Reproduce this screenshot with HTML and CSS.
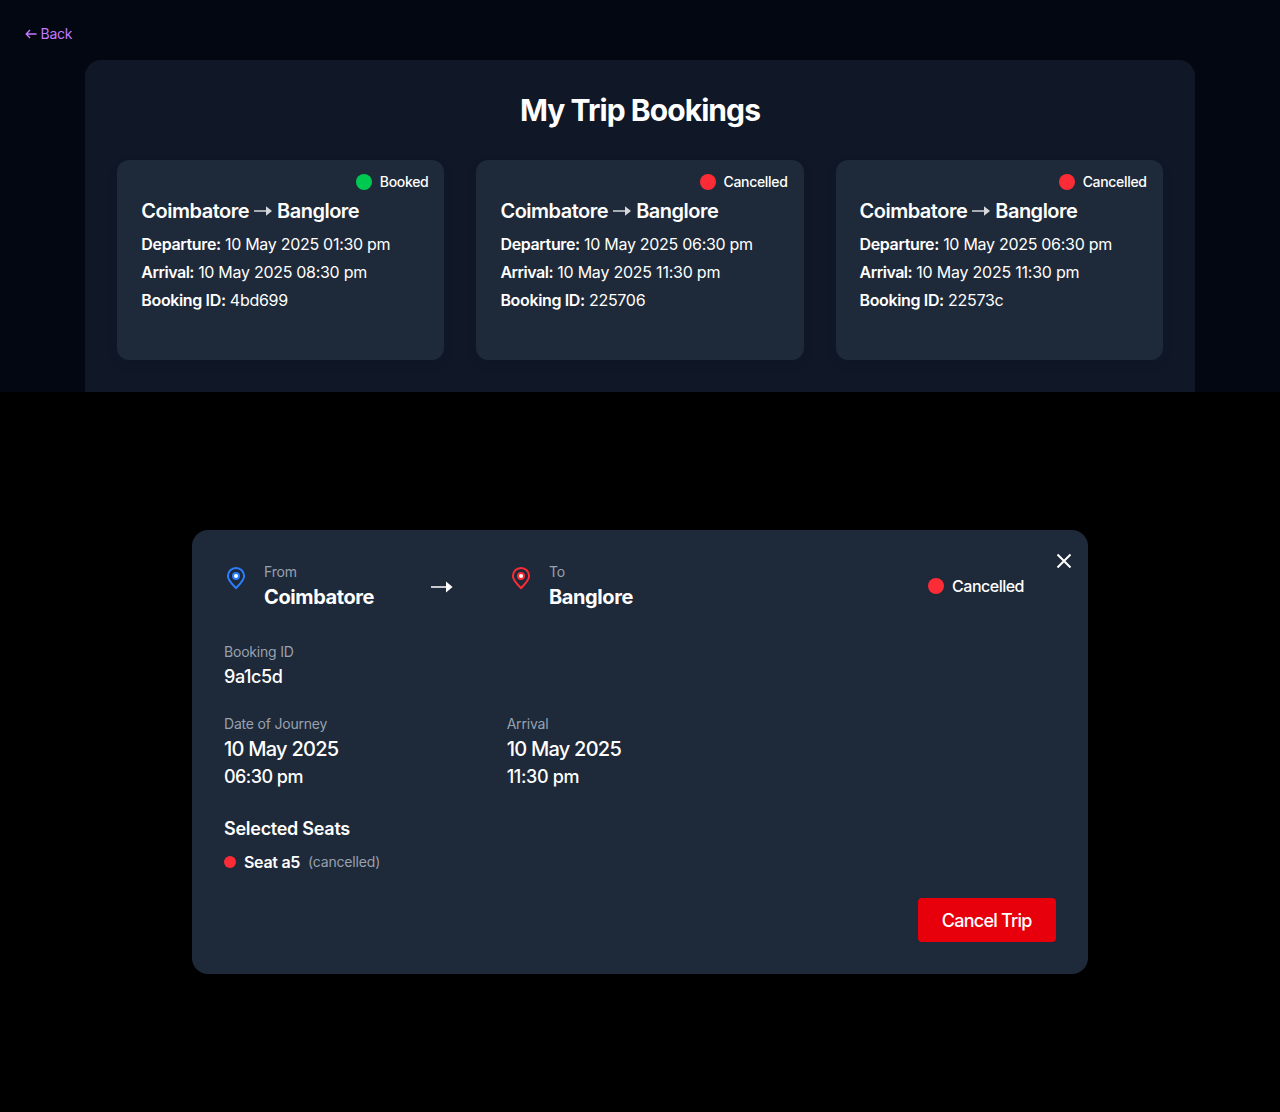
FILE: index.html
```html
<!DOCTYPE html>
<html lang="en">
<head>
<meta charset="utf-8">
<title>My Trip Bookings</title>
<link rel="stylesheet" href="styles.css">
</head>
<body>
<main class="page">
  <a class="back"><svg width="12" height="10" viewBox="0 0 12 10"><path d="M5 1 1.200 5 5 9M1.200 5H11.500"/></svg><span>Back</span></a>
  <section class="panel">
    <h1 class="title"><span>My Trip Bookings</span></h1>
    <div class="cards">
      <article class="card">
        <div class="status"><i class="dot green"></i><span>Booked</span></div>
        <h2 class="route"><span>Coimbatore</span><svg width="18" height="10" viewBox="0 0 18 10"><path class="shaft" d="M0 5h13"/><path class="head" d="M12 .200 18 5l-6 4.800z"/></svg><span>Banglore</span></h2>
        <p><strong>Departure:</strong> <span>10 May 2025 01:30 pm</span></p>
        <p><strong class="arrival">Arrival:</strong> <span>10 May 2025 08:30 pm</span></p>
        <p><strong>Booking ID:</strong> <span>4bd699</span></p>
      </article>
      <article class="card">
        <div class="status"><i class="dot red"></i><span>Cancelled</span></div>
        <h2 class="route"><span>Coimbatore</span><svg width="18" height="10" viewBox="0 0 18 10"><path class="shaft" d="M0 5h13"/><path class="head" d="M12 .200 18 5l-6 4.800z"/></svg><span>Banglore</span></h2>
        <p><strong>Departure:</strong> <span>10 May 2025 06:30 pm</span></p>
        <p><strong class="arrival">Arrival:</strong> <span class="eleven">10 May 2025 11:30 pm</span></p>
        <p><strong>Booking ID:</strong> <span>225706</span></p>
      </article>
      <article class="card">
        <div class="status"><i class="dot red"></i><span>Cancelled</span></div>
        <h2 class="route"><span>Coimbatore</span><svg width="18" height="10" viewBox="0 0 18 10"><path class="shaft" d="M0 5h13"/><path class="head" d="M12 .200 18 5l-6 4.800z"/></svg><span>Banglore</span></h2>
        <p><strong>Departure:</strong> <span>10 May 2025 06:30 pm</span></p>
        <p><strong class="arrival">Arrival:</strong> <span class="eleven">10 May 2025 11:30 pm</span></p>
        <p><strong>Booking ID:</strong> <span>22573c</span></p>
      </article>
    </div>
  </section>
</main>
<div class="backdrop">
  <section class="dialog">
    <button class="close" aria-label="Close"><svg width="16" height="16" viewBox="0 0 16 16"><path d="m1.500 1.500 13 13m0-13-13 13"/></svg></button>
    <header class="trip">
      <div class="place from">
        <svg class="pin blue" width="24" height="24" viewBox="0 0 24 24"><path d="M12 22C9.500 19.300 3.900 14.700 3.900 10a8.100 8.100 0 0 1 16.200 0c0 4.700-5.600 9.300-8.100 12z"/><circle cx="12" cy="10" r="3"/></svg>
        <div><div class="label">From</div><div class="city">Coimbatore</div></div>
      </div>
      <svg class="arrow" width="22" height="12" viewBox="0 0 22 12"><path class="shaft" d="M0 6h16"/><path class="head" d="M15 .400 21.600 6 15 11.600z"/></svg>
      <div class="place to">
        <svg class="pin crimson" width="24" height="24" viewBox="0 0 24 24"><path d="M12 22C9.500 19.300 3.900 14.700 3.900 10a8.100 8.100 0 0 1 16.200 0c0 4.700-5.600 9.300-8.100 12z"/><circle cx="12" cy="10" r="3"/></svg>
        <div><div class="label">To</div><div class="city">Banglore</div></div>
      </div>
      <div class="state"><i class="dot red"></i><span>Cancelled</span></div>
    </header>
    <div class="booking"><div class="label">Booking ID</div><div class="time code"><span>9a1c5d</span></div></div>
    <div class="dates">
      <div><div class="label"><span>Date of Journey</span></div><div class="date"><span>10 May 2025</span></div><div class="time depart"><span>06:30 pm</span></div></div>
      <div><div class="label">Arrival</div><div class="date"><span>10 May 2025</span></div><div class="time"><span>11:30 pm</span></div></div>
    </div>
    <h3 class="seats"><span>Selected Seats</span></h3>
    <div class="seat"><i class="dot red small"></i><strong>Seat a5</strong><span class="note">(cancelled)</span></div>
    <div class="actions"><button class="cancel"><span>Cancel Trip</span></button></div>
  </section>
</div>
</body>
</html>
```
FILE: styles.css
```css
* { box-sizing: border-box; margin: 0; padding: 0; }
body { background: #000; color: #fff; font: 400 16px/24px Inter, sans-serif; }
svg { display: block; flex: none; overflow: visible; }
.page { height: 392px; padding-top: 24px; background: #030712; overflow: hidden; }
.back { display: flex; align-items: center; gap: 4px; height: 20px; margin-left: 24.5px; color: #c27aff; font-size: 14px; line-height: 20px; letter-spacing: -.25px; }
.back svg { fill: none; stroke: currentColor; stroke-width: 1.3; }
.panel { width: 1109.3px; height: 364px; margin: 16px auto 0; padding: 32px; border-radius: 16px; background: #101828; }
.title { font-size: 30px; line-height: 37px; height: 36px; font-weight: 700; text-align: center; letter-spacing: -.93px; }
.cards { display: grid; grid-template-columns: repeat(3, 1fr); gap: 32px; margin-top: 32px; }
.card { height: 200px; padding: 12px 24px; border-radius: 12px; background: #1e2939; box-shadow: 0 4px 10px rgba(0, 0, 0, .1); }
.status { display: flex; justify-content: flex-end; align-items: center; gap: 8px; height: 20px; margin-right: -8px; font-size: 14px; font-weight: 500; letter-spacing: -.32px; }
.dot { flex: none; width: 16px; height: 16px; border-radius: 50%; }
.green { background: #00c951; }
.red { background: #fb2c36; }
.small { width: 12px; height: 12px; }
.route { display: flex; align-items: center; gap: 5px; height: 28px; margin: 5px 0 5px; font-size: 20px; font-weight: 600; letter-spacing: -.5px; }
.route svg { opacity: .82; }
.shaft { fill: none; stroke: #fff; stroke-width: 1.5; }
.head { fill: #fff; }
.card p { height: 28px; line-height: 28px; letter-spacing: -.29px; white-space: nowrap; }
.card strong { letter-spacing: -.36px; }
.card .arrival { letter-spacing: -.5px; }
.card .eleven { letter-spacing: -.23px; }
strong { font-weight: 600; }
.backdrop { height: 720px; padding-top: 138px; background: #000; }
.dialog { position: relative; width: 896px; height: 444px; margin: 0 auto; padding: 32px; border-radius: 16px; background: #1e2939; }
button { border: 0; color: #fff; font: inherit; }
.close { position: absolute; top: 23px; right: 16px; background: none; }
.close svg { fill: none; stroke: #fff; stroke-width: 2; }
.trip { display: flex; height: 48px; }
.place { display: flex; gap: 16px; }
.from { width: 207px; }
.to { margin-left: 56px; }
.pin { margin-top: 4px; fill: none; stroke-width: 2; }
.pin circle { fill: #fff; }
.blue { stroke: #2b7fff; }
.crimson { stroke: #fb2c36; }
.label { height: 20px; color: #99a1af; font-size: 14px; line-height: 20px; letter-spacing: -.2px; }
.city { height: 28px; font-size: 20px; line-height: 30px; font-weight: 700; letter-spacing: -.4px; }
.arrow { margin-top: 18.500px; }
.state { display: flex; align-items: center; gap: 8px; height: 48px; margin-left: auto; margin-right: 32px; font-weight: 500; letter-spacing: -.5px; }
.booking { margin-top: 32px; }
.time { height: 28px; font-size: 18px; line-height: 30px; font-weight: 500; letter-spacing: -.35px; }
.depart { letter-spacing: -.55px; }
.code { line-height: 29px; letter-spacing: -.4px; }
.date { height: 28px; font-size: 20px; line-height: 30px; font-weight: 500; letter-spacing: -.75px; }
.dates { display: grid; grid-template-columns: repeat(3, 1fr); column-gap: 16px; margin-top: 24px; }
.seats { height: 28px; margin-top: 24px; font-size: 18px; line-height: 30px; font-weight: 600; letter-spacing: -.27px; }
.seat { display: flex; align-items: center; gap: 8px; height: 24px; margin-top: 8px; letter-spacing: -.3px; }
.note { color: #99a1af; font-size: 14px; letter-spacing: -.18px; }
.actions { display: flex; justify-content: flex-end; margin-top: 24px; }
.cancel { width: 138.500px; height: 44px; padding-top: 2px; border-radius: 4px; background: #e7000b; font-size: 18px; font-weight: 500; letter-spacing: -.75px; }
```
